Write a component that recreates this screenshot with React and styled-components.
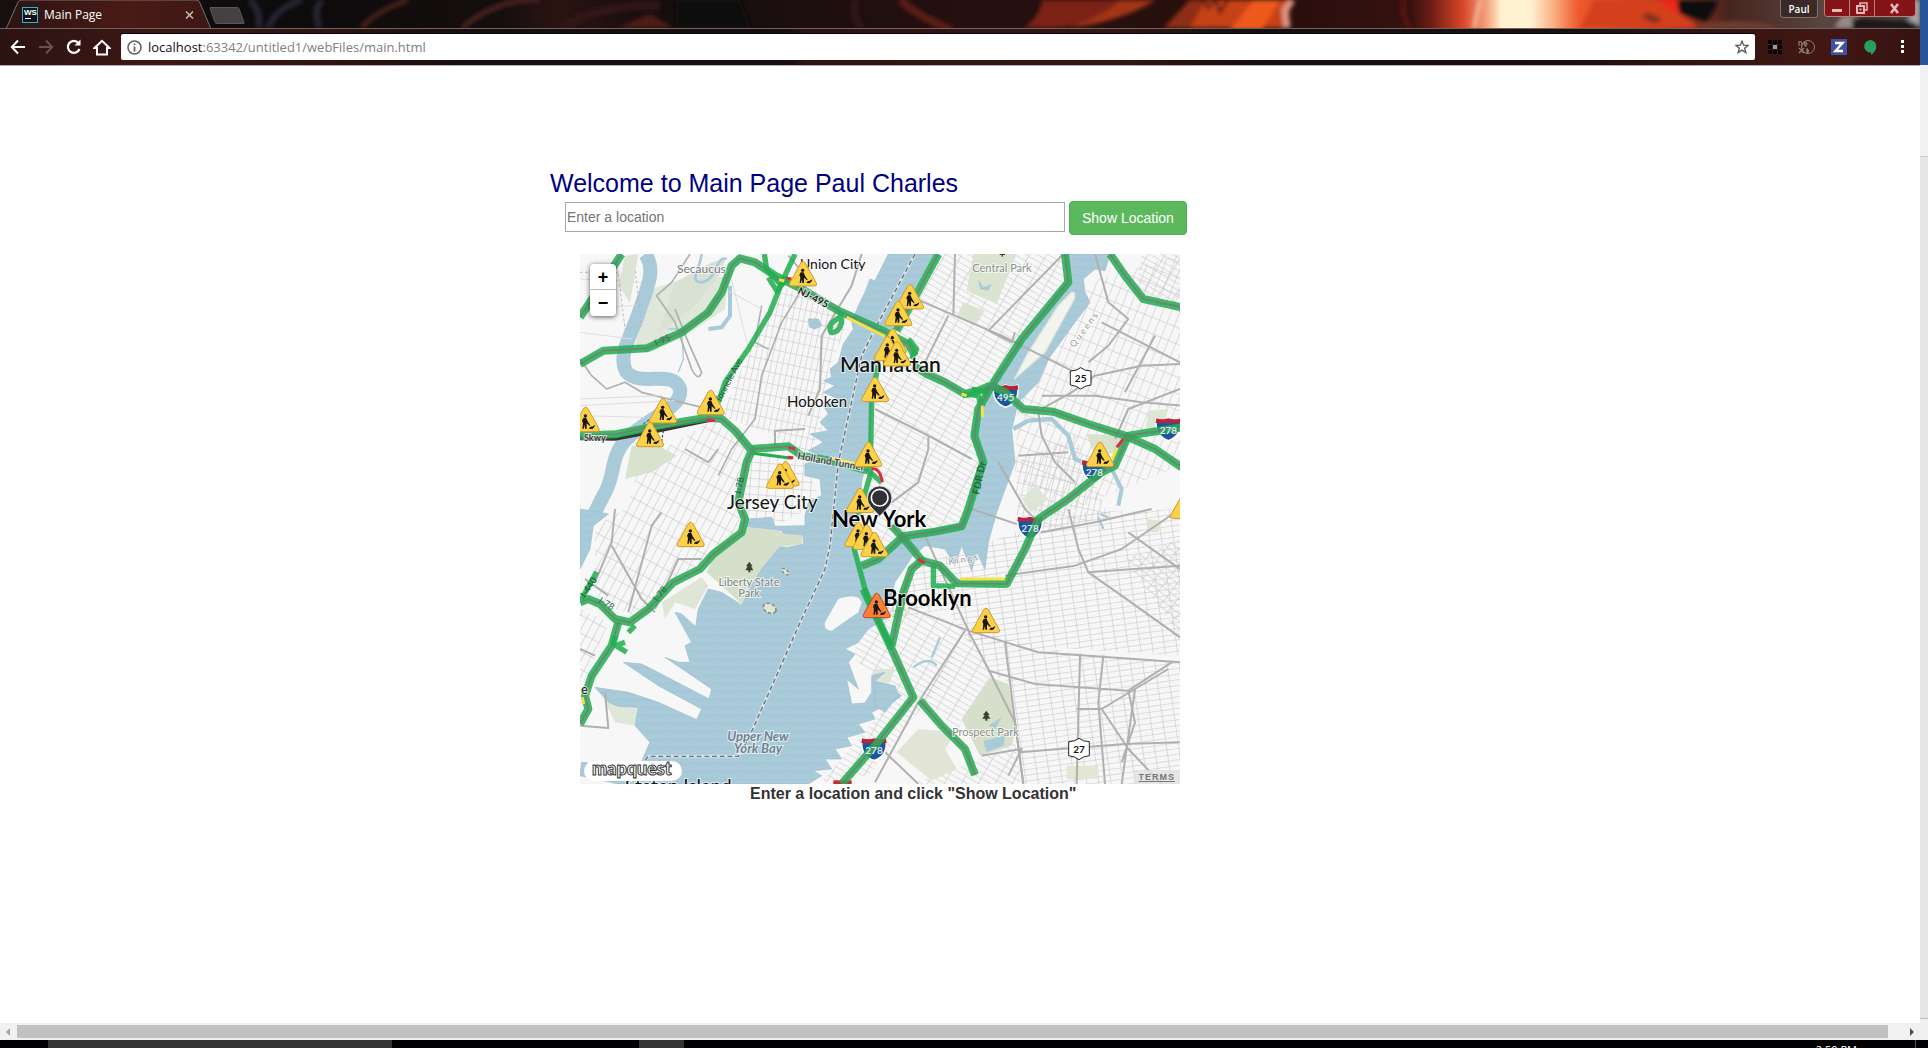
import React from "react";
import styled, { createGlobalStyle } from "styled-components";

const GlobalStyle = createGlobalStyle`
  * { box-sizing: border-box; }
  html, body, #root { height: 100%; margin: 0; }
  body {
    background: #fff;
    color: #333;
    font-family: "Liberation Sans", Arial, sans-serif;
    font-size: 14px;
    overflow: hidden;
  }
  button, input { font: inherit; }
`;

const Desktop = styled.div`
  display: flex;
  flex-direction: column;
  height: 100vh;
`;
const Windows = styled.div`
  display: flex;
  flex: 1;
  min-height: 0;
`;
const Browser = styled.div`
  display: flex;
  flex-direction: column;
  flex: 1;
  min-width: 0;
`;

/* ---------- browser chrome ---------- */
const Chrome = styled.header`
  position: relative;
  height: 66px;
  display: flex;
  flex-direction: column;
  background: #170d0d;
  border-bottom: 1px solid #b5abae;
  color: #fff;
  font-family: "Open Sans", "Noto Sans", sans-serif;
`;
const Artwork = styled.svg`
  position: absolute;
  inset: 0;
  width: 100%;
  height: 100%;
`;
const TabStrip = styled.div`
  position: relative;
  display: flex;
  align-items: flex-start;
  height: 28px;
`;
const Tab = styled.div`
  position: relative;
  display: flex;
  align-items: center;
  gap: 6px;
  width: 207px;
  height: 28px;
  margin-left: 5px;
  padding: 0 18px 0 17px;
  font-size: 12px;
`;
const TabShape = styled.svg`
  position: absolute;
  inset: 0;
  width: 100%;
  height: 100%;
`;
const Favicon = styled.span`
  position: relative;
  width: 16px;
  height: 16px;
  margin-top: 2px;
  padding-left: 1px;
  border: 1px solid #22b8d8;
  background: #101417;
  font: bold 8px/9px "Liberation Sans", sans-serif;
  &::after {
    content: "";
    display: block;
    width: 6px;
    height: 1px;
    margin: 1px;
    background: #fff;
  }
`;
const TabTitle = styled.span`
  position: relative;
  flex: 1;
  line-height: 16px;
  margin-top: 2px;
`;
const PlainButton = styled.button`
  position: relative;
  display: grid;
  place-items: center;
  width: ${(p) => p.$w || 28}px;
  height: ${(p) => p.$h || 26}px;
  padding: 0;
  border: 0;
  background: none;
  color: #fff;
`;
const NewTab = styled.button`
  width: 30px;
  height: 17px;
  margin: 7px 0 0 0;
  padding: 0;
  border: 1px solid #5a5756;
  border-radius: 2px;
  background: #434141;
  transform: skewX(20deg);
`;
const WindowControls = styled.div`
  display: flex;
  gap: 6px;
  margin-left: auto;
  padding-right: 4px;
`;
const Profile = styled.button`
  width: 38px;
  height: 18px;
  padding: 0;
  border: 1px solid #7d706d;
  border-top: 0;
  border-radius: 0 0 4px 4px;
  background: #3a2a27;
  color: #fff;
  font-size: 10px;
  font-weight: 600;
  line-height: 16px;
`;
const Caption = styled.div`
  display: flex;
  height: 17px;
  border: 1px solid #b08380;
  border-top: 0;
  border-radius: 0 0 4px 4px;
  overflow: hidden;
`;
const CaptionButton = styled.button`
  display: grid;
  place-items: center;
  width: ${(p) => p.$w}px;
  padding: 0;
  border: 0;
  border-left: ${(p) => (p.$first ? "0" : "1px solid #b08380")};
  background: #861316;
`;
const Toolbar = styled.div`
  position: relative;
  display: flex;
  align-items: center;
  height: 37px;
  padding: 1px 4px 0 4px;
`;
const AddressBar = styled.form`
  display: flex;
  flex: 1;
  align-items: center;
  height: 26px;
  margin: 0 9px 0 5px;
  padding: 0 6px;
  gap: 6px;
  border-radius: 2px;
  background: #fff;
  box-shadow: 0 -1px 0 #080304;
`;
const Url = styled.div`
  flex: 1;
  color: #808080;
  font-size: 13px;
  line-height: 20px;
  b { font-weight: 400; color: #111; }
`;

/* ---------- page ---------- */
const Viewport = styled.main`
  flex: 1;
  min-height: 0;
  overflow: hidden;
  padding: 103px 0 0 550px;
`;
const Title = styled.h1`
  margin: 0;
  color: #00007f;
  font-size: 25px;
  font-weight: 400;
  line-height: 28px;
`;
const LocationForm = styled.form`
  display: flex;
  gap: 4px;
  padding: 4px 0 0 15px;
`;
const LocationInput = styled.input`
  width: 500px;
  height: 30px;
  margin-top: 1px;
  padding: 1px;
  border: 1px solid #a6a6a6;
  font-size: 14px;
  color: #333;
  &::placeholder { color: #757575; opacity: 1; }
`;
const ShowButton = styled.button`
  height: 34px;
  padding: 0 12px;
  border: 1px solid #4cae4c;
  border-radius: 4px;
  background: #5cb85c;
  color: #fff;
  font-size: 14px;
`;
const Hint = styled.p`
  margin: 0 0 0 200px;
  color: #333;
  font-weight: 700;
  font-size: 16px;
  line-height: 20px;
`;

/* ---------- map widget ---------- */
const MapBox = styled.section`
  position: relative;
  width: 600px;
  height: 530px;
  margin: 19px 0 0 30px;
  overflow: hidden;
`;
const ZoomControl = styled.div`
  position: absolute;
  left: 10px;
  top: 10px;
  display: flex;
  flex-direction: column;
  width: 26px;
  border-radius: 4px;
  background: #fff;
  box-shadow: 0 1px 5px rgba(0, 0, 0, 0.65);
`;
const ZoomButton = styled.button`
  height: 26px;
  padding: 0;
  border: 0;
  border-bottom: ${(p) => (p.$divided ? "1px solid #bbb" : "0")};
  background: none;
  color: #000;
  font: bold 18px/26px "Liberation Sans", sans-serif;
`;
const Terms = styled.a`
  position: absolute;
  right: 0;
  bottom: 0;
  padding: 1px 5px 1px 5px;
  background: rgba(225, 225, 225, 0.8);
  color: #777;
  font-size: 9px;
  font-weight: 700;
  letter-spacing: 1px;
  line-height: 12px;
`;
const Label = styled.text`
  font-family: Lato, sans-serif;
  font-size: ${(p) => p.$size}px;
  font-weight: ${(p) => p.$weight || 400};
  font-style: ${(p) => (p.$italic ? "italic" : "normal")};
  letter-spacing: ${(p) => p.$spacing || 0}px;
  fill: ${(p) => p.$color || "#111"};
  stroke: ${(p) => p.$halo || "rgba(255,255,255,0.7)"};
  stroke-width: ${(p) => (p.$halo === "none" ? 0 : 2)}px;
  paint-order: stroke;
  text-anchor: ${(p) => p.$anchor || "start"};
`;

/* ---------- scroll bars and task bar ---------- */
const ScrollTrack = styled.div`
  display: flex;
  align-items: center;
  height: 17px;
  padding: 0 6px 0 6px;
  gap: 7px;
  background: #f1f1f1;
`;
const ScrollThumb = styled.div`
  flex: 1;
  height: 13px;
  margin-right: 15px;
  background: #c1c1c1;
`;
const Arrow = styled.i`
  border: 4px solid transparent;
  border-left: ${(p) => (p.$right ? "4px solid #505050" : "0")};
  border-right: ${(p) => (p.$right ? "0" : "4px solid #a3a3a3")};
`;
const Neighbour = styled.aside`
  display: flex;
  flex-direction: column;
  width: 8px;
  background: #f0f0f0;
`;
const NeighbourPart = styled.div`
  height: ${(p) => p.$h || "auto"};
  flex: ${(p) => p.$grow || "none"};
  background: ${(p) => p.$bg};
  border-bottom: 1px solid ${(p) => p.$line || p.$bg};
`;
const Taskbar = styled.footer`
  display: flex;
  height: 8px;
  background: #020204;
  overflow: hidden;
`;
const Task = styled.div`
  width: ${(p) => p.$w}px;
  margin-left: ${(p) => p.$gap}px;
  background: #343434;
`;
const Clock = styled.time`
  margin: 2px 58px 0 auto;
  color: #fff;
  font: 11px/16px "Open Sans", sans-serif;
`;
const DesktopEdge = styled.div`
  width: 1px;
  margin-right: 12px;
  background: #555;
`;

function ThemeArt() {
  return (
    <Artwork viewBox="0 0 1920 65" preserveAspectRatio="none" aria-hidden="true">
      <defs>
        <filter id="soft" x="-5%" y="-20%" width="110%" height="140%"><feGaussianBlur stdDeviation="2" /></filter>
        <linearGradient id="strip">
          <stop offset="0" stopColor="#171011" /><stop offset="0.15" stopColor="#0d0b0c" />
          <stop offset="0.26" stopColor="#150e0e" /><stop offset="0.29" stopColor="#2a1412" />
          <stop offset="0.34" stopColor="#160d0d" /><stop offset="0.5" stopColor="#23100f" />
          <stop offset="0.68" stopColor="#2b0f0d" /><stop offset="0.735" stopColor="#351210" />
          <stop offset="0.745" stopColor="#6b1c14" /><stop offset="0.762" stopColor="#d84628" />
          <stop offset="0.775" stopColor="#f6a884" /><stop offset="0.782" stopColor="#fff1cf" />
          <stop offset="0.797" stopColor="#fff3d4" /><stop offset="0.808" stopColor="#fbb68a" />
          <stop offset="0.822" stopColor="#ee5a2d" /><stop offset="0.87" stopColor="#b53219" />
          <stop offset="0.9" stopColor="#46251f" /><stop offset="0.95" stopColor="#5a4440" />
          <stop offset="1" stopColor="#4b4545" />
        </linearGradient>
        <linearGradient id="bar">
          <stop offset="0" stopColor="#2b1312" /><stop offset="0.08" stopColor="#3d1714" />
          <stop offset="0.17" stopColor="#301412" /><stop offset="0.24" stopColor="#180e0f" />
          <stop offset="0.41" stopColor="#170e0f" /><stop offset="0.42" stopColor="#2e1413" />
          <stop offset="0.58" stopColor="#341613" /><stop offset="0.65" stopColor="#180e0f" />
          <stop offset="0.82" stopColor="#1c0f10" /><stop offset="0.87" stopColor="#2f1311" />
          <stop offset="0.95" stopColor="#421713" /><stop offset="1" stopColor="#341312" />
        </linearGradient>
        <clipPath id="stripClip"><rect width="1920" height="28" /></clipPath>
      </defs>
      <g clipPath="url(#stripClip)">
        <rect width="1920" height="28" fill="url(#strip)" />
        <g filter="url(#soft)" fill="none">
          <path d="M250 0Q262 12 258 28M268 28Q276 8 302 0M320 28Q312 10 322 0" stroke="#262637" strokeWidth="6" />
          <path d="M362 28Q374 12 408 0M462 28Q480 12 505 4Q520 0 540 0" stroke="#4c201d" strokeWidth="5" />
          <path d="M560 28Q600 4 660 6" stroke="#331817" strokeWidth="9" />
          <path d="M616 28L650 14L674 28Z" fill="#4e1d17" />
          <path d="M676 0H740L752 28H676Z" fill="#0b0a0a" />
          <path d="M900 0Q920 18 952 30" stroke="#5c1e16" strokeWidth="8" />
          <path d="M856 0Q850 14 862 28" stroke="#301512" strokeWidth="8" />
          <path d="M1042 0H1152Q1125 18 1060 28H1024Q1040 16 1042 0Z" fill="#7c2414" />
          <path d="M1120 0H1156Q1120 22 1070 28Q1110 12 1120 0Z" fill="#a33416" />
          <path d="M1190 0H1292L1286 28H1164Z" fill="#c64219" />
          <path d="M1164 28L1190 0H1206L1190 28Z" fill="#8f2d16" />
          <path d="M1230 30L1254 0H1280L1262 30Z" fill="#ee5a1c" />
          <path d="M1204 0L1208 8L1216 0L1220 12L1228 0" stroke="#5e1d12" strokeWidth="3" />
          <path d="M1404 0Q1400 14 1410 28" stroke="#5d1812" strokeWidth="5" />
          <path d="M1292 0L1285 10L1287 28" stroke="#dc9584" strokeWidth="7" />
          <path d="M1480 0L1474 28" stroke="#f9c8a8" strokeWidth="3" />
          <path d="M1594 0L1580 28H1700L1660 0Z" fill="#d4401f" />
          <path d="M1646 12L1662 18L1656 24L1642 18Z" fill="#83301f" />
          <path d="M1660 0L1676 0L1678 12L1668 10Z" fill="#ee251c" />
          <path d="M1678 0H1718Q1714 14 1706 22Q1694 18 1680 14Z" fill="#100c0d" />
          <path d="M1706 24Q1750 18 1780 28H1690Z" fill="#764130" />
          <path d="M1834 28L1842 16H1858L1856 28Z" fill="#9b8a88" />
          <path d="M1852 18L1920 22V30H1852Z" fill="#1b1314" />
          <path d="M1912 0H1920V26L1908 20Z" fill="#a8a4a4" />
        </g>
      </g>
      <rect y="28" width="1920" height="37" fill="url(#bar)" />
      <rect y="28" width="1920" height="1" fill="#6f6361" />
    </Artwork>
  );
}

function BrowserChrome() {
  return (
    <Chrome>
      <ThemeArt />
      <TabStrip>
        <Tab>
          <TabShape viewBox="0 0 207 28" preserveAspectRatio="none" aria-hidden="true">
            <defs>
              <linearGradient id="tabFill">
                <stop offset="0" stopColor="#2c1413" /><stop offset="0.6" stopColor="#4a1a16" /><stop offset="1" stopColor="#3d1815" />
              </linearGradient>
            </defs>
            <path d="M0 29L2 27L13 2Q14 0 17 0H191Q194 0 195 3L206 29Z" fill="url(#tabFill)" stroke="#77706e" />
          </TabShape>
          <Favicon>WS</Favicon>
          <TabTitle>Main Page</TabTitle>
          <PlainButton $w={10} $h={28} aria-label="Close tab">
            <svg width="9" height="30" viewBox="0 -10 9 30"><path d="M1 1.500L8 8.500M8 1.500L1 8.500" stroke="#c6bab8" strokeWidth="1.600" /></svg>
          </PlainButton>
        </Tab>
        <NewTab aria-label="New tab" />
        <WindowControls>
          <Profile>Paul</Profile>
          <Caption>
            <CaptionButton $w={24} $first aria-label="Minimize">
              <svg width="12" height="14"><rect x="1" y="8" width="10" height="3" fill="#e3b9b9" /></svg>
            </CaptionButton>
            <CaptionButton $w={25} aria-label="Restore">
              <svg width="12" height="14" fill="none" stroke="#e3b9b9" strokeWidth="2"><path d="M4 4V2H11V9H9" strokeWidth="1.500" /><rect x="1" y="5" width="7" height="7" /><rect x="4" y="8" width="1" height="1" strokeWidth="1" /></svg>
            </CaptionButton>
            <CaptionButton $w={41} aria-label="Close">
              <svg width="12" height="14"><path d="M2 3L9 12M9 3L2 12" stroke="#e3b9b9" strokeWidth="2.600" /></svg>
            </CaptionButton>
          </Caption>
        </WindowControls>
      </TabStrip>
      <Toolbar>
        <PlainButton aria-label="Back">
          <svg width="16" height="16" fill="none" stroke="#fff" strokeWidth="2"><path d="M15 8H2M8 1.500L1.800 8L8 14.500" /></svg>
        </PlainButton>
        <PlainButton aria-label="Forward">
          <svg width="16" height="16" fill="none" stroke="#655251" strokeWidth="2"><path d="M1 8H14M8 1.500L14.200 8L8 14.500" /></svg>
        </PlainButton>
        <PlainButton aria-label="Reload">
          <svg width="16" height="16" fill="none" stroke="#fff" strokeWidth="2.200"><path d="M13.500 10A6 6 0 1 1 12.500 4" /><path d="M14.500 0.500V6.500H8.500Z" fill="#fff" stroke="none" /></svg>
        </PlainButton>
        <PlainButton aria-label="Home">
          <svg width="18" height="17" fill="none" stroke="#fff" strokeWidth="2"><path d="M1.500 9L9 1.800L16.500 9H14V15.500H4V9Z" /></svg>
        </PlainButton>
        <AddressBar>
          <svg width="15" height="15" fill="none" stroke="#616161" strokeWidth="1.500"><circle cx="7.500" cy="7.500" r="6.500" /><path d="M7.500 6.500V11.500M7.500 3.500V5" strokeWidth="1.800" /></svg>
          <Url><b>localhost</b>:63342/untitled1/webFiles/main.html</Url>
          <svg width="14" height="14" viewBox="0 0 14 14" fill="none" stroke="#5a5a5a" strokeWidth="1.400"><path d="M7 1.200L8.700 5.200L13 5.500L9.700 8.300L10.800 12.600L7 10.200L3.200 12.600L4.300 8.300L1 5.500L5.300 5.200Z" /></svg>
        </AddressBar>
        <PlainButton $w={21} aria-label="Grid extension">
          <svg width="14" height="14" fill="#050303"><path d="M0 0h4v4H0zM5 0h4v4H5zM10 0h4v4h-4zM0 5h4v4H0zM10 5h4v4h-4zM0 10h4v4H0zM5 10h4v4H5zM10 10h4v4h-4z" /><path d="M5 5h4v4H5z" fill="#999" /></svg>
        </PlainButton>
        <PlainButton $w={43} aria-label="Next extension">
          <svg width="17" height="16" fill="none" stroke="#8c7f7e"><circle cx="10" cy="8" r="6.500" /><path d="M1 2V7M1 3Q4 1 4 7M6 5H9Q8 2 6 4Q6 7 9 7M1 9L6 14M6 9L1 14M9 9V14Q12 12 9 10" strokeWidth="1.200" /></svg>
        </PlainButton>
        <PlainButton $w={21} aria-label="Z extension">
          <svg width="16" height="16"><rect width="16" height="16" fill="#3f51a3" /><path d="M4 4H11.500L4.500 12H12" fill="none" stroke="#fff" strokeWidth="2.400" /></svg>
        </PlainButton>
        <PlainButton $w={41} aria-label="Chat extension">
          <svg width="14" height="17"><path d="M7 1A6.300 6.300 0 0 1 13.300 7.300C13.300 11 11 14 8 16V13.600A6.300 6.300 0 0 1 7 1Z" fill="#2a9e5c" /></svg>
        </PlainButton>
        <PlainButton $w={26} aria-label="Menu">
          <svg width="4" height="14" fill="#fff"><rect x="0" y="0" width="3" height="3" /><rect x="0" y="5" width="3" height="3" /><rect x="0" y="10" width="3" height="3" /></svg>
        </PlainButton>
      </Toolbar>
    </Chrome>
  );
}

/* Terrain is drawn on a grid three times finer than the widget. */
const WATER = [
  "M940 15L900 95L885 90L870 130L850 170L830 220L835 240L805 285L790 340L765 360L770 385L745 395L780 410L745 430L790 450L745 470L760 495L735 520L760 545L705 555L745 580L700 605L745 625L690 645L690 680L735 690L740 740L700 760L690 800L690 830L600 832L590 805L520 810L515 832L620 845L625 852L685 858L685 885L640 895L612 895L592 920L560 960L530 1010L500 1068L440 1030L400 1020L370 1080L362 1133L320 1095L300 1090L350 1180L330 1190L345 1240L310 1240L270 1225L410 1320L402 1350L230 1260L200 1245L145 1240L250 1310L380 1380L365 1412L250 1360L160 1330L60 1315L100 1360L130 1372L190 1375L180 1430L225 1480L218 1495L190 1560L20 1540L15 1580L130 1605L700 1605L740 1580L715 1565L770 1560L750 1530L800 1530L780 1500L830 1490L815 1465L870 1450L850 1425L900 1410L890 1390L930 1370L960 1355L980 1340L940 1310L900 1295L930 1270L890 1280L890 1330L870 1362L830 1365L815 1290L850 1320L820 1240L840 1215L810 1200L850 1180L880 1140L930 1110L960 1000L1010 925L1050 890L1110 900L1140 950L1160 890L1190 965L1205 910L1230 960L1240 880L1265 790L1320 640L1310 540L1330 460L1390 400L1420 330L1500 220L1545 160L1530 130L1525 90L1560 60L1590 65L1605 15L1465 15L1480 90L1450 130L1340 270L1250 400L1210 470L1190 560L1215 640L1190 710L1170 820L1050 845L970 870L920 925L870 955L845 930L840 870L860 700L885 590L890 440L915 300L960 240L1000 150L1075 15Z",
  "M15 780L100 795L55 830L45 900L15 960Z",
  "M700 210L730 210L740 230L720 240L705 235Z",
  "M900 1300L960 1310L970 1340L930 1390L900 1370Z",
];
const RIVERS = [
  ["M210 15C245 60 215 120 195 180C170 260 125 320 155 370C200 415 295 360 315 420C325 480 220 500 150 575C105 625 120 690 85 740L60 790L15 850", 42],
  ["M380 15C375 60 340 100 380 100C430 90 420 20 455 30", 8],
  ["M465 110L465 200L440 235L400 240", 12],
  ["M280 240L320 240L325 330L310 370", 4],
  ["M1315 540L1360 515L1430 510L1480 560L1500 630L1550 650", 13],
  ["M1610 660L1640 720L1630 770", 12],
  ["M1015 1255Q1060 1220 1085 1250M1070 1225L1095 1165", 7],
  ["M1570 805L1585 840M1575 795L1600 805", 7],
];
const PARKS = [
  ["M1195 15H1325L1265 165L1175 125Z", "#dbe4d1"],
  ["M515 832L685 858L680 885L610 895L560 960L500 1065L395 970L420 915L480 870Z", "#d4e0ca"],
  ["M1245 1285L1300 1305L1325 1435L1310 1490L1215 1520L1160 1410Z", "#d5dfca"],
  ["M965 1510L1030 1440L1145 1450L1110 1500L1145 1560L1070 1595Z", "#e2e5d5"],
  ["M1475 1550H1570V1590H1475Z", "#e1e7d2"],
  ["M1535 555L1650 560L1620 610L1560 625Z", "#d8e2cd"],
  ["M1720 485L1780 480L1760 560L1710 550Z", "#dde6d4"],
  ["M1715 810L1760 815L1750 850L1720 850Z", "#dde6d4"],
  ["M230 120L310 95L460 80L450 180L330 260L230 310L180 290Z", "#dfe6da"],
  ["M410 40L450 30L440 70L350 180L250 250L300 100Z", "#d8e2d2"],
  ["M150 20L190 15L165 160L130 110Z", "#dbe4d5"],
  ["M170 590L240 585L305 620L230 670L150 690Z", "#d7e2cf"],
  ["M380 985L400 1010L360 1080L300 1060L270 1110L260 1060Z", "#dfe6d8"],
  ["M90 1360L190 1375L180 1430L120 1420Z", "#dfe7d8"],
  ["M900 1260L960 1260L940 1310L890 1290Z", "#dce5d6"],
  ["M1340 750L1380 710L1420 750L1370 790Z", "#dce5d6"],
];
const BLOCKS = [
  ["M620 110L790 190L830 200L760 360L740 540L690 640L600 560L440 500L520 310Z", "gridHoboken"],
  ["M530 600L690 640L740 760L600 830L500 800Z", "gridFlat"],
  ["M200 640L420 510L530 610L490 780L500 850L300 1000L180 1100L60 1060L60 830L150 780Z", "gridJersey"],
  ["M15 1080L100 1120L40 1280L15 1320Z", "gridJersey"],
  ["M1075 15L1465 15L1480 90L1250 400L1190 560L1215 640L1170 820L970 870L850 930L890 560L900 400L960 240Z", "gridManhattan"],
  ["M1545 100L1815 15L1815 650L1400 820L1320 640L1330 460L1420 330Z", "gridQueens"],
  ["M1700 15L1815 15L1815 180L1680 130Z", "gridManhattan"],
  ["M1320 640L1500 560L1600 800L1330 870Z", "gridHoboken"],
  ["M1240 880L1500 790L1815 780V1220L1500 1200L1180 1180L1120 1080L930 1110L1020 950Z", "gridBrooklyn"],
  ["M840 1180L960 1060L1170 1130L1120 1290L1020 1400L880 1580L740 1600L960 1340L840 1230Z", "gridManhattan"],
  ["M1170 1140L1480 1210L1815 1240V1605H1340L1300 1300L1230 1260Z", "gridBrooklyn"],
  ["M1650 930L1815 870V1160Z", "gridDiagonal"],
  ["M1180 1145L1040 1350L1150 1440L1250 1270Z", "gridManhattan"],
  ["M1010 1605L1140 1560L1220 1530L1320 1480L1340 1605Z", "gridManhattan"],
];
const STREETS = [
  "M345 15L290 100L245 140L300 220L350 360Q370 400 380 370L340 280L300 180",
  "M15 330L50 380L95 420L150 400L200 430L440 490",
  "M560 170L540 280L580 300M640 20L700 90L620 220L560 380L540 510L470 600L430 680",
  "M860 15L830 110L740 260L735 420L700 500M600 590L600 545L690 540",
  "M1140 15L1135 200M1000 140L1280 260L1550 395M1465 15L1240 245L1310 280L1320 250",
  "M1120 200L1050 340M900 480L1060 560L1060 600L1030 700L950 760M1060 560L1190 630",
  "M1820 345L1700 350L1560 380L1490 430L1400 480M1400 440L1560 440L1700 460L1820 470",
  "M1560 15L1600 160L1660 210L1600 290L1540 340M1580 220L1815 340M1740 260L1650 430",
  "M1390 490L1400 560L1440 640L1500 700M1330 620L1480 610M1815 420L1660 480L1620 570",
  "M1270 640L1350 780L1400 830M1190 780L1400 850L1560 820L1730 780",
  "M1290 980L1500 950L1640 900L1815 780M1480 780L1510 900L1540 970L1640 1040L1815 1165M1540 970L1815 950M1660 850L1815 960",
  "M1000 1075L1180 1145L1390 1210L1815 1240M1050 860L1180 1145L1240 1260L1320 1420L1345 1605",
  "M1240 1265L1380 1305L1660 1325L1790 1240M1290 1180L1310 1340L1345 1605M1515 1220L1505 1605M1585 1220L1570 1360L1590 1605",
  "M1580 1380L1780 1260M1680 1320L1640 1605M1505 1380L1580 1380L1660 1500L1760 1605M1660 1325L1680 1420L1640 1540",
  "M1330 1510L1650 1485L1815 1480M1170 1145L1030 1360L900 1600M1300 1580L1340 1500L1220 1520M910 1490L1030 1605",
  "M120 780L110 880L60 1000M110 890L200 1050L240 1090M15 1200L60 1220M260 790L230 830L160 1090M380 930L310 930L240 1080",
  "M90 1330L100 1437L15 1430M30 990L100 1040M330 600L400 640L430 600",
];
const FREEWAYS = [
  "M15 345L85 305L215 298L320 250L400 190L440 130L470 50L495 28L540 40L600 80L680 120L790 185L930 248L1000 285L1020 320",
  "M15 205L140 15",
  "M15 560L120 556L250 530L400 505L440 510L480 545L530 605L515 640L490 760L510 810L500 850L415 915L375 960L295 1000L220 1080L165 1120L120 1110L75 1065L40 1050L15 1060",
  "M130 1120L110 1190L50 1280L30 1340L40 1380L15 1425",
  "M530 600L640 592L680 620L780 638L880 665",
  "M1090 15L1000 180L965 245",
  "M1015 350L1055 375L1110 400L1170 435L1210 425L1245 410",
  "M860 950L910 930L985 862L1080 848L1160 832L1180 780L1205 700L1225 640L1198 560L1210 480L1250 410L1340 270L1480 100L1470 15",
  "M1250 410L1290 430L1345 480L1435 488L1540 525L1650 560L1740 600L1820 655",
  "M1605 15L1650 80L1705 150L1820 175",
  "M1820 535L1660 560L1620 650L1580 670L1480 750L1390 810L1350 900L1295 1005L1145 1003L1095 950L1040 935L1010 960L985 1030L950 1190",
  "M950 830L1000 885L1045 940",
  "M865 1020L950 1200L1015 1345L900 1490L800 1605",
  "M1035 1355L1100 1430L1170 1500L1200 1578",
];
const GREEN_ONLY = [
  "M660 15L625 90L585 190L520 300L450 400L430 460",
  "M568 15L575 60L620 110", "M580 85L605 125L640 85",
  "M795 185L800 220Q790 255 768 250Q755 225 795 205",
  "M65 968L20 1050", "M120 1160L115 1185L155 1210M120 1190L150 1180M160 1150L180 1130",
  "M910 350L890 440L888 560L885 680L850 800",
  "M840 850L838 900L875 1040L950 1200", "M885 670L920 700",
  "M1000 270L1025 300L1010 330", "M1075 950L1075 1010L1140 1012",
  "M1165 435L1210 440L1215 460M1190 420L1240 430",
];
const SLOW = ["M815 205L930 262", "M770 628L850 645", "M1155 990H1290", "M612 92L628 96", "M1608 640L1625 600M1750 770", "M22 1345L26 1365", "M1222 470L1222 505", "M1160 435L1175 440"];
const JAM = ["M635 88L650 90", "M640 595L660 600M638 625L655 626", "M890 660Q915 655 922 700", "M1625 595L1645 570", "M1030 930L1048 942", "M395 515L420 515"];
const WORKS = [
  [684, 38], [32, 475], [264, 449], [225, 520], [407, 424], [632, 638], [615, 645], [900, 385], [880, 580],
  [855, 718], [1005, 107], [970, 157], [953, 240], [938, 262], [966, 278], [1575, 580], [1827, 735],
  [347, 820], [850, 820], [875, 828], [898, 850], [1233, 1078],
];
const SHIELDS = [[1292, 440, "495"], [1780, 540, "278"], [1558, 665, "278"], [1365, 835, "278"], [897, 1500, "278"]];
const HEXES = [[1517, 388, "25"], [1512, 1500, "27"]];

function WorkSign({ x, y, orange }) {
  return (
    <g transform={`translate(${x} ${y})`}>
      <path d="M-6 3Q0 -4 6 3L40 64Q43 73 34 73H-34Q-43 73 -40 64Z" fill={orange ? "#fb8035" : "#fdd145"} stroke={orange ? "#b64a20" : "#c99a33"} strokeWidth="3" />
      <circle cx="-1" cy="26" r="5" fill="#161616" />
      <path d="M-7 32H2L6 42L14 54L12 56L3 48L3 64H-2L-3 52L-6 64H-10L-8 47L-11 40Z" fill="#161616" />
      <path d="M10 64Q12 57 19 58L28 53L26 59L20 65Z" fill="#161616" />
    </g>
  );
}

function Grid({ id, w, h, angle }) {
  return (
    <pattern id={id} width={w} height={h} patternUnits="userSpaceOnUse" patternTransform={`rotate(${angle})`}>
      <path d={`M0 0H${w}M0 0V${h}`} stroke="#bfbfbf" strokeWidth="3" fill="none" />
    </pattern>
  );
}

function CityMap() {
  return (
    <svg width="600" height="530" viewBox="0 0 600 530" role="img" aria-label="Traffic map of New York">
      <defs>
        <Grid id="gridManhattan" w={44} h={17} angle={30} />
        <Grid id="gridHoboken" w={17} h={34} angle={12} />
        <Grid id="gridFlat" w={26} h={24} angle={4} />
        <Grid id="gridJersey" w={22} h={48} angle={28} />
        <Grid id="gridQueens" w={24} h={46} angle={22} />
        <Grid id="gridBrooklyn" w={36} h={17} angle={-8} />
        <Grid id="gridDiagonal" w={30} h={17} angle={38} />
        <pattern id="waves" width="36" height="24" patternUnits="userSpaceOnUse">
          <rect width="36" height="24" fill="#a9cad9" />
          <path d="M0 8Q9 14 18 8T36 8" fill="none" stroke="#a0c4d5" strokeWidth="3" />
        </pattern>
      </defs>
      <rect width="600" height="530" fill="#f7f7f7" />
      <g transform="scale(0.33333) translate(-15 -15)" fill="none" strokeLinejoin="round">
        {BLOCKS.map(([d, id], i) => <path key={i} d={d} fill={`url(#${id})`} />)}
        {PARKS.map(([d, c], i) => <path key={i} d={d} fill={c} />)}
        <path d="M1165 160L1230 185L1200 230L1145 205Z" fill="#dbe4d1" />
        {RIVERS.map(([d, w], i) => <path key={i} d={d} stroke="#a9cad9" strokeWidth={w} />)}
        {WATER.map((d, i) => <path key={i} d={d} fill="url(#waves)" stroke="#9cbccb" strokeWidth="2" />)}
        <path d="M1490 130Q1502 125 1498 150L1410 310L1318 390L1360 310L1450 170Z" fill="#f4f4ee" stroke="#dfe6d5" strokeWidth="4" />
        <path d="M750 1120L790 1050Q850 1030 860 1060L850 1090L770 1145Q745 1145 750 1120Z" fill="#f7f7f7" />
        <path d="M1210 90L1225 115L1250 105L1240 125L1215 120ZM1190 200L1210 215M1225 1475L1290 1460L1285 1490L1235 1508ZM1240 1430L1280 1405L1260 1440Z" fill="#a9cad9" />
        <ellipse cx="584" cy="1078" rx="20" ry="14" transform="rotate(25 584 1078)" fill="#dfe6d5" stroke="#8f8c80" strokeWidth="5" strokeDasharray="10 6" />
        <ellipse cx="631" cy="968" rx="13" ry="6" transform="rotate(40 631 968)" fill="#dfe6d5" stroke="#8f8c80" strokeWidth="4" strokeDasharray="9 6" />
        <path d="M15 70H130L150 240L200 230L180 60" stroke="#b9b9b9" strokeWidth="3" strokeDasharray="8 7" />
        {STREETS.map((d, i) => <path key={i} d={d} stroke="#b0b0b0" strokeWidth={i < 3 ? 5 : 6} />)}
        <path d="M15 90L200 100M15 180L180 170M15 250L170 270M15 450L260 440M15 470L300 455M15 500L210 505M450 120L560 180M470 90L520 300" stroke="#dedede" strokeWidth="3" />
        <path d="M1020 15L900 240L860 320L790 640L775 790L765 890L750 960L680 1110L520 1470L490 1522H220L190 1560" stroke="#d3e2e9" strokeWidth="9" />
        <path d="M1020 15L900 240L860 320L790 640L775 790L765 890L750 960L680 1110L520 1470L490 1522H220L190 1560" stroke="#66747c" strokeWidth="4" strokeDasharray="14 9" />
        <path d="M205 525L225 510L265 545L260 580L220 590Z" stroke="#333" strokeWidth="3" strokeDasharray="8 5" />
        <path d="M15 568L120 570L250 545L410 512" stroke="#3c3133" strokeWidth="11" />
        {SHIELDS.map(([x, y], i) => (
          <g key={i} transform={`translate(${x} ${y})`}>
            <path d="M-36 -32Q-18 -22 0 -32Q18 -22 36 -32Q44 20 0 35Q-44 20 -36 -32Z" fill="#1f539f" stroke="#fff" strokeWidth="5" />
            <path d="M-36 -32Q-18 -26 0 -32Q18 -26 36 -32L38 -18H-38Z" fill="#bb2336" />
          </g>
        ))}
        <path d="M775 1594H830V1605H775Z" fill="#c62a3b" />
        {FREEWAYS.map((d, i) => <path key={i} d={d} stroke="#22ad50" strokeOpacity="0.86" strokeWidth="24" />)}
        {FREEWAYS.map((d, i) => <path key={i} d={d} stroke="#6f7f76" strokeOpacity="0.9" strokeWidth="5" />)}
        {GREEN_ONLY.map((d, i) => <path key={i} d={d} stroke="#22ad50" strokeOpacity="0.86" strokeWidth="16" />)}
        <path d="M530 612L650 628" stroke="#27ac53" strokeWidth="9" />
        {SLOW.map((d, i) => <path key={i} d={d} stroke="#f6e04a" strokeWidth="9" />)}
        {JAM.map((d, i) => <path key={i} d={d} stroke="#dd2d45" strokeWidth="9" />)}
        {HEXES.map(([x, y], i) => (
          <path key={i} d="M0 -32Q12 -22 31 -22V20Q12 22 0 32Q-12 22 -31 20V-22Q-12 -22 0 -32Z" transform={`translate(${x} ${y})`} fill="#fff" stroke="#222" strokeWidth="3" />
        ))}
        <g fill="#3d4034">
          <path d="M523 938L533 952H528L535 964H526V970H520V964H511L518 952H513Z" />
          <path d="M1234 1385L1244 1398H1239L1246 1409H1237V1415H1231V1409H1222L1229 1398H1224Z" />
          <path d="M1274 15H1290V18H1284V23H1280V18H1274Z" />
        </g>
      </g>
      <Label x="97" y="19" $size={12} $color="#777">Secaucus</Label>
      <Label x="220" y="15" $size={14}>Union City</Label>
      <Label x="207" y="153" $size={15}>Hoboken</Label>
      <Label x="147" y="255" $size={19}>Jersey City</Label>
      <Label x="260" y="118" $size={21} $weight={600}>Manhattan</Label>
      <Label x="252" y="273" $size={22} $weight={700} $color="#000">New York</Label>
      <Label x="303" y="352" $size={22} $weight={700} $color="#000">Brooklyn</Label>
      <Label x="169" y="332" $size={11} $anchor="middle" $color="#808580">Liberty State</Label>
      <Label x="169" y="343" $size={11} $anchor="middle" $color="#808580">Park</Label>
      <Label x="178" y="487" $size={13} $weight={700} $italic $anchor="middle" $color="#6b8291">Upper New</Label>
      <Label x="178" y="499" $size={13} $weight={700} $italic $anchor="middle" $color="#6b8291">York Bay</Label>
      <Label x="422" y="18" $size={11} $anchor="middle" $color="#8a8f88">Central Park</Label>
      <Label x="372" y="482" $size={11} $color="#8a8f88">Prospect Park</Label>
      <Label x="45" y="539" $size={19}>Staten Island</Label>
      <Label transform="translate(494 94) rotate(-53)" $size={9} $spacing={2} $color="#999">Queens</Label>
      <Label transform="translate(369 311) rotate(-10)" $size={9} $spacing={2} $color="#999">Kings</Label>
      <Label transform="translate(76 92) rotate(-22)" $size={9} $color="#39604a" $halo="none">I-95</Label>
      <Label transform="translate(217 39) rotate(27)" $size={10} $weight={700} $color="#222">NJ-495</Label>
      <Label transform="translate(140 149) rotate(-62)" $size={9} $color="#28543a" $halo="none">Tonnele Ave</Label>
      <Label x="4" y="187" $size={9} $weight={700} $color="#333">Skwy</Label>
      <Label transform="translate(217 205) rotate(10)" $size={10} $weight={700} $color="#444">Holland Tunnel</Label>
      <Label transform="translate(399 241) rotate(-78)" $size={10} $weight={700} $color="#1c6a3c" $halo="none">FDR Dr</Label>
      <Label transform="translate(77 348) rotate(-50)" $size={9} $color="#1c6a3c" $halo="none">I-78</Label>
      <Label transform="translate(5 344) rotate(-56)" $size={9} $weight={700} $color="#0f6a35" $halo="none">I-440</Label>
      <Label transform="translate(18 348) rotate(32)" $size={9} $color="#1c6a3c" $halo="none">I-78</Label>
      <Label transform="translate(161 240) rotate(-80)" $size={9} $color="#28543a" $halo="none">I-78</Label>
      <Label x="1" y="440" $size={13}>e</Label>
      {SHIELDS.map(([x, y, n], i) => (
        <Label key={i} x={(x - 15) / 3} y={(y - 15) / 3 + 5} $size={10} $weight={700} $color="#d8ecf0" $halo="none" $anchor="middle">{n}</Label>
      ))}
      {HEXES.map(([x, y, n], i) => (
        <Label key={i} x={(x - 15) / 3} y={(y - 15) / 3 + 4} $size={10} $weight={700} $halo="none" $anchor="middle">{n}</Label>
      ))}
      <g transform="scale(0.33333) translate(-15 -15)">
        {WORKS.map(([x, y]) => <WorkSign key={`${x}-${y}`} x={x} y={y} />)}
        <WorkSign x={905} y={1033} orange />
        <path d="M914 802L886 772A37 37 0 1 1 942 772Z" fill="#303135" stroke="#e8e8e8" strokeWidth="3" />
        <circle cx="914" cy="746" r="25" fill="#303135" stroke="#fff" strokeWidth="5" />
      </g>
      <rect x="4" y="507" width="98" height="20" rx="10" fill="#fff" />
      <text x="12" y="521" fontFamily="Lato, sans-serif" fontWeight="900" fontSize="18" fill="#fff" stroke="#333" strokeWidth="1">mapquest</text>
    </svg>
  );
}

export default function App() {
  const stop = (e) => e.preventDefault();
  return (
    <Desktop>
      <GlobalStyle />
      <Windows>
        <Browser>
          <BrowserChrome />
          <Viewport>
            <Title>Welcome to Main Page Paul Charles</Title>
            <LocationForm onSubmit={stop}>
              <LocationInput type="text" placeholder="Enter a location" aria-label="Enter a location" />
              <ShowButton type="submit">Show Location</ShowButton>
            </LocationForm>
            <MapBox>
              <CityMap />
              <ZoomControl>
                <ZoomButton $divided aria-label="Zoom in">+</ZoomButton>
                <ZoomButton aria-label="Zoom out">−</ZoomButton>
              </ZoomControl>
              <Terms href="#terms">TERMS</Terms>
            </MapBox>
            <Hint>Enter a location and click "Show Location"</Hint>
          </Viewport>
          <ScrollTrack>
            <Arrow />
            <ScrollThumb />
            <Arrow $right />
          </ScrollTrack>
        </Browser>
        <Neighbour>
          <NeighbourPart $h="65px" $bg="#28559a" />
          <NeighbourPart $h="92px" $bg="#f1f1f1" $line="#cfcfcf" />
          <NeighbourPart $grow="1" $bg="#e6e6e6" $line="#bdbdbd" />
          <NeighbourPart $h="21px" $bg="#f0f0f0" />
        </Neighbour>
      </Windows>
      <Taskbar>
        <Task $w={344} $gap={48} />
        <Task $w={45} $gap={247} />
        <Clock>2:50 PM</Clock>
        <DesktopEdge />
      </Taskbar>
    </Desktop>
  );
}
